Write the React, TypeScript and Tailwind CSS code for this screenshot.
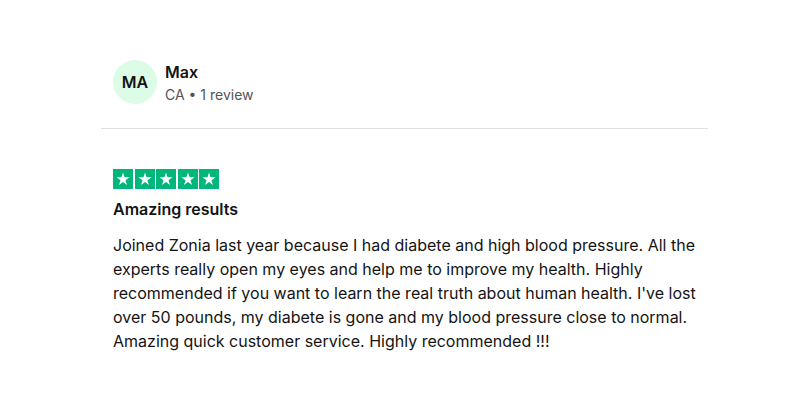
const Star = () => (
  <svg viewBox="0 0 20 20" className="h-[20px] w-[20px]">
    <rect width="20" height="20" fill="#00b67a" />
    <path
      d="M10 3.6l1.6 4.7h4.9l-4 2.9 1.5 4.7-4-2.9-4 2.9 1.5-4.7-4-2.9h4.9z"
      fill="#fff"
    />
  </svg>
);

export default function App() {
  return (
    <div className="h-[400px] w-[800px] bg-white font-['Inter',sans-serif] text-[#141414]">
      <div className="ml-[101px] w-[607px] pt-[60px]">
        <div className="flex items-start gap-[8px] pl-[12px]">
          <div className="flex h-[44px] w-[44px] items-center justify-center rounded-full bg-[#dcfce7] text-[16px] font-semibold">
            MA
          </div>
          <div className="pt-[2px]">
            <div className="text-[16px] font-semibold leading-[20px]">Max</div>
            <div className="mt-[3px] text-[14px] leading-[20px] text-[#545454]">CA • 1 review</div>
          </div>
        </div>
        <div className="mt-[23px] h-px bg-[#e0dfe0]" />
        <div className="pl-[12px] pt-[40px]">
          <div className="flex gap-[1.5px]">
            <Star />
            <Star />
            <Star />
            <Star />
            <Star />
          </div>
          <div className="mt-[9px] text-[16px] font-semibold leading-[22px]">Amazing results</div>
          <p className="mt-[13px] w-[585px] text-[16px] leading-[24px]">
            Joined Zonia last year because I had diabete and high blood pressure. All the experts really open my eyes
            and help me to improve my health. Highly recommended if you want to learn the real truth about human
            health. I've lost over 50 pounds, my diabete is gone and my blood pressure close to normal. Amazing quick
            customer service. Highly recommended !!!
          </p>
        </div>
      </div>
    </div>
  );
}
